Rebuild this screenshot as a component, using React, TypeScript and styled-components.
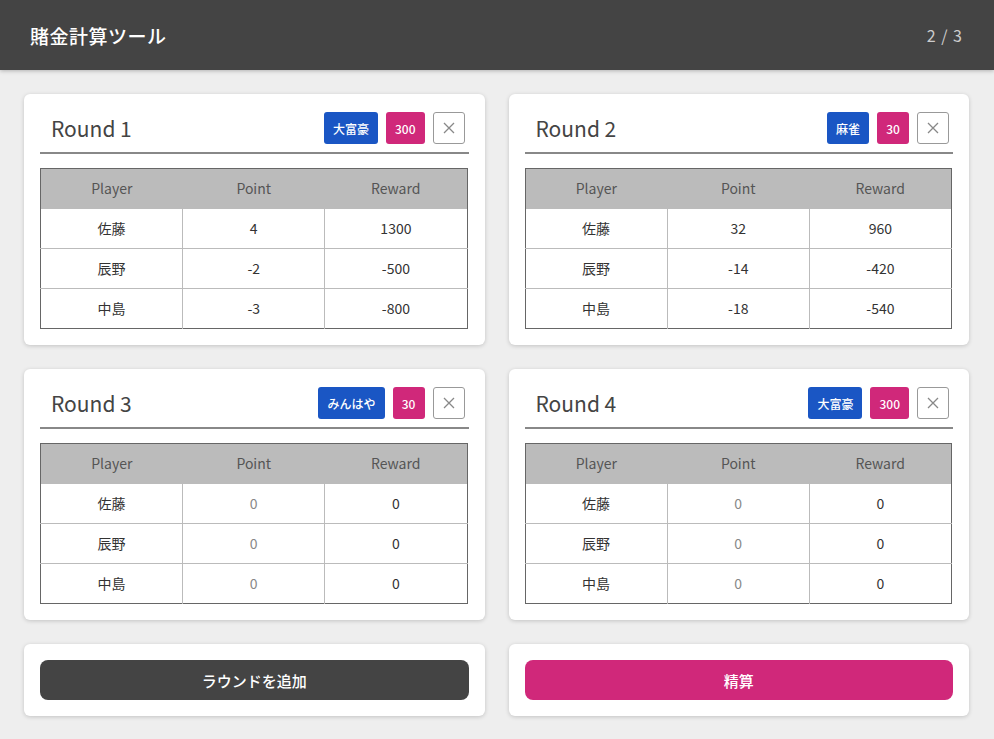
import React from "react";
import styled, { createGlobalStyle } from "styled-components";

const GlobalStyle = createGlobalStyle`
  html, body {
    margin: 0;
    padding: 0;
    background: #eeeeee;
  }

  body {
    font-family: "Noto Sans CJK JP", "Noto Sans", sans-serif;
    color: #333;
  }

  * {
    box-sizing: border-box;
  }
`;

const Header = styled.header`
  height: 70px;
  padding: 0 31px 0 30px;
  background: #444444;
  display: flex;
  align-items: center;
  justify-content: space-between;
  box-shadow: 0 1px 4px rgba(0, 0, 0, 0.25);
`;

const Title = styled.h1`
  margin: 0;
  color: #ffffff;
  font-size: 19px;
  font-weight: 500;
  letter-spacing: 0.5px;
`;

const Pager = styled.span`
  color: #cccccc;
  font-size: 16px;
  letter-spacing: 1px;
`;

const Main = styled.main`
  padding: 24px 25px 23px 24px;
  display: grid;
  grid-template-columns: 1fr 1fr;
  gap: 24px;
`;

const Card = styled.section`
  background: #ffffff;
  border-radius: 6px;
  box-shadow: 0 1px 4px rgba(0, 0, 0, 0.18);
  padding: 18px 16px 16px 16px;
`;

const FooterCard = styled(Card)`
  padding: 16px;
`;

const CardHeader = styled.div`
  display: flex;
  align-items: center;
  gap: 8px;
  padding: 0 4px 8px 11px;
  border-bottom: 2px solid #888888;
`;

const RoundTitle = styled.h2`
  margin: 0 auto 0 0;
  font-size: 21px;
  font-weight: 400;
  color: #444444;
`;

const Badge = styled.span<{ $color: string }>`
  height: 32px;
  padding: 0 9px;
  min-width: 32px;
  border-radius: 3px;
  background: ${props => props.$color};
  color: #ffffff;
  font-size: 12px;
  font-weight: 500;
  display: flex;
  align-items: center;
  justify-content: center;
`;

const CloseButton = styled.button`
  width: 32px;
  height: 32px;
  padding: 0;
  border: 1px solid #999999;
  border-radius: 3px;
  background: #ffffff;
  color: #888888;
  display: flex;
  align-items: center;
  justify-content: center;
`;

const Table = styled.table`
  width: calc(100% - 1px);
  margin-top: 14px;
  border-collapse: collapse;
  border: 1px solid #666666;
  table-layout: fixed;
  font-size: 14px;
`;

const Th = styled.th`
  height: 40px;
  padding: 0 0 1px;
  background: #bbbbbb;
  color: #555555;
  font-weight: 400;
`;

const Tr = styled.tr`
  & + & > td {
    border-top: 1px solid #bbbbbb;
  }
`;

const Td = styled.td<{ $muted?: boolean }>`
  height: 40px;
  padding: 0 0 1px;
  text-align: center;
  color: ${props => (props.$muted ? "#888888" : "#333333")};
  border-left: 1px solid #bbbbbb;

  &:first-child {
    border-left: none;
  }
`;

const ActionButton = styled.button<{ $color: string }>`
  width: 100%;
  height: 40px;
  border: none;
  border-radius: 8px;
  background: ${props => props.$color};
  color: #ffffff;
  font-family: inherit;
  font-size: 15px;
  font-weight: 500;
`;

type Row = { name: string; point: string; reward: string };

type Round = {
  title: string;
  game: string;
  rate: string;
  rows: Row[];
  empty?: boolean;
};

const rounds: Round[] = [
  {
    title: "Round 1",
    game: "大富豪",
    rate: "300",
    rows: [
      { name: "佐藤", point: "4", reward: "1300" },
      { name: "辰野", point: "-2", reward: "-500" },
      { name: "中島", point: "-3", reward: "-800" },
    ],
  },
  {
    title: "Round 2",
    game: "麻雀",
    rate: "30",
    rows: [
      { name: "佐藤", point: "32", reward: "960" },
      { name: "辰野", point: "-14", reward: "-420" },
      { name: "中島", point: "-18", reward: "-540" },
    ],
  },
  {
    title: "Round 3",
    game: "みんはや",
    rate: "30",
    empty: true,
    rows: [
      { name: "佐藤", point: "0", reward: "0" },
      { name: "辰野", point: "0", reward: "0" },
      { name: "中島", point: "0", reward: "0" },
    ],
  },
  {
    title: "Round 4",
    game: "大富豪",
    rate: "300",
    empty: true,
    rows: [
      { name: "佐藤", point: "0", reward: "0" },
      { name: "辰野", point: "0", reward: "0" },
      { name: "中島", point: "0", reward: "0" },
    ],
  },
];

const CloseIcon = () => (
  <svg width="12" height="12" viewBox="0 0 12 12">
    <path d="M1 1 L11 11 M11 1 L1 11" stroke="#888" strokeWidth="1.3" fill="none" />
  </svg>
);

const RoundCard = ({ round }: { round: Round }) => (
  <Card>
    <CardHeader>
      <RoundTitle>{round.title}</RoundTitle>
      <Badge $color="#1a56c4">{round.game}</Badge>
      <Badge $color="#d0287a">{round.rate}</Badge>
      <CloseButton type="button">
        <CloseIcon />
      </CloseButton>
    </CardHeader>
    <Table>
      <thead>
        <tr>
          <Th>Player</Th>
          <Th>Point</Th>
          <Th>Reward</Th>
        </tr>
      </thead>
      <tbody>
        {round.rows.map(row => (
          <Tr key={row.name}>
            <Td>{row.name}</Td>
            <Td $muted={round.empty}>{row.point}</Td>
            <Td>{row.reward}</Td>
          </Tr>
        ))}
      </tbody>
    </Table>
  </Card>
);

const App = () => {
  return (
    <>
      <GlobalStyle />
      <Header>
        <Title>賭金計算ツール</Title>
        <Pager>2 / 3</Pager>
      </Header>
      <Main>
        {rounds.map(round => (
          <RoundCard key={round.title} round={round} />
        ))}
        <FooterCard>
          <ActionButton type="button" $color="#444444">
            ラウンドを追加
          </ActionButton>
        </FooterCard>
        <FooterCard>
          <ActionButton type="button" $color="#d0287a">
            精算
          </ActionButton>
        </FooterCard>
      </Main>
    </>
  );
};

export default App;
